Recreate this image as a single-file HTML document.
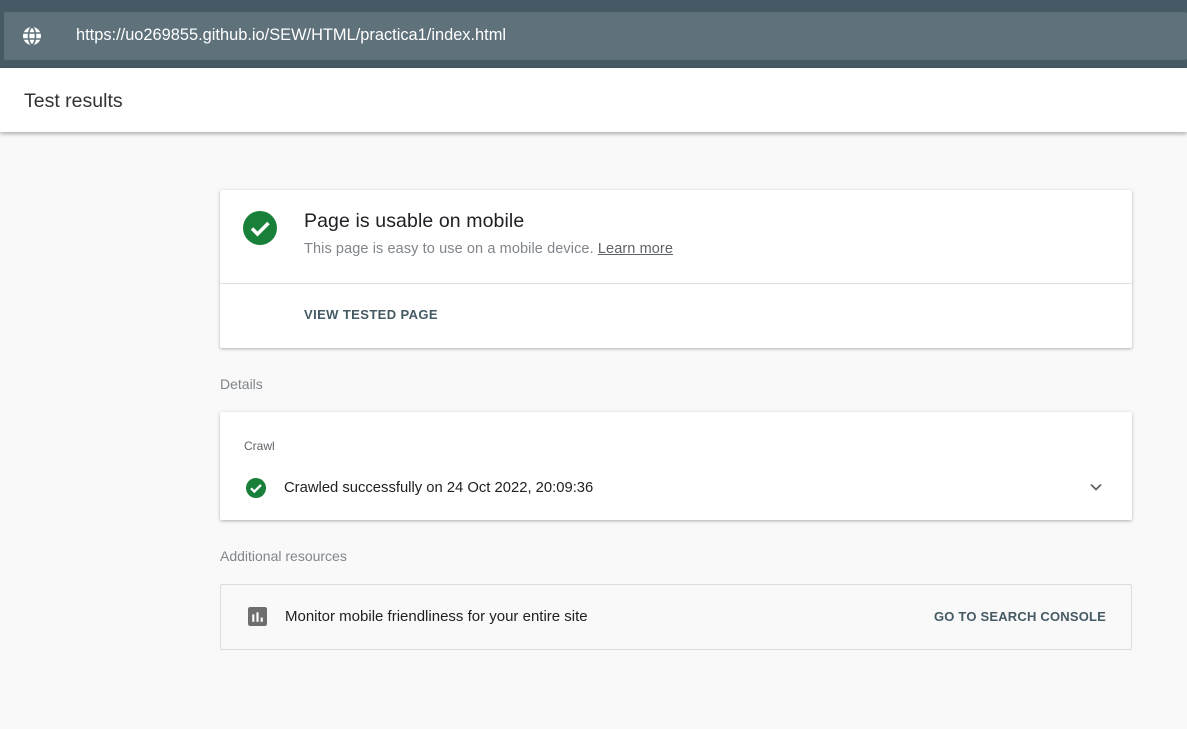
<!DOCTYPE html>
<html><head><style>
body{margin:0;width:1187px;height:729px;background:#f9f9f9;font-family:"Liberation Sans",sans-serif;position:relative;overflow:hidden}
.top{position:absolute;left:0;top:0;width:1187px;height:68px;background:#465a65}
.url{position:absolute;left:4px;top:12px;width:1183px;height:48px;background:#5f717a;border-radius:2px}
.url span{position:absolute;left:72px;top:14px;color:#fff;font-size:16.4px}
.hdr{position:absolute;left:0;top:68px;width:1187px;height:64px;background:#fff;box-shadow:0 2px 4px rgba(0,0,0,.3)}
.hdr span{position:absolute;left:24px;top:22px;font-size:19.5px;color:#333}
.card{position:absolute;left:220px;width:912px;background:#fff;box-shadow:0 1px 3px rgba(0,0,0,.3);border-radius:2px}
.t{position:absolute;white-space:nowrap}
</style></head><body>
<div class="top"><div class="url">
<svg style="position:absolute;left:18px;top:14px" width="20" height="20" viewBox="0 0 20 20"><circle cx="10" cy="10" r="9" fill="#fff"/><g stroke="#5f717a" stroke-width="1.6" fill="none"><ellipse cx="10" cy="10" rx="3.5" ry="8.5"/><line x1="1" y1="7" x2="19" y2="7"/><line x1="1" y1="13" x2="19" y2="13"/></g></svg>
<span>https://uo269855.github.io/SEW/HTML/practica1/index.html</span></div></div>
<div class="hdr"><span>Test results</span></div>
<div class="card" style="top:190px;height:158px">
<svg style="position:absolute;left:23px;top:21px" width="34" height="34" viewBox="0 0 34 34"><circle cx="17" cy="17" r="17" fill="#188038"/><path d="M9 17.5l5.5 5.5L25.5 12" stroke="#fff" stroke-width="3.5" fill="none"/></svg>
<div class="t" style="left:84px;top:20px;font-size:19.5px;color:#202124;letter-spacing:.1px">Page is usable on mobile</div>
<div class="t" style="left:84px;top:51px;font-size:14.5px;color:#80868b;letter-spacing:.1px">This page is easy to use on a mobile device. <u style="color:#5f6368">Learn more</u></div>
<div style="position:absolute;left:0;top:93px;width:912px;height:1px;background:#e0e0e0"></div>
<div class="t" style="left:84px;top:117px;font-size:13px;font-weight:bold;color:#455a64;letter-spacing:.4px">VIEW TESTED PAGE</div>
</div>
<div class="t" style="left:220px;top:376px;font-size:14px;color:#80868b">Details</div>
<div class="card" style="top:412px;height:108px">
<div class="t" style="left:24px;top:27px;font-size:12px;color:#5f6368">Crawl</div>
<svg style="position:absolute;left:26px;top:66px" width="20" height="20" viewBox="0 0 20 20"><circle cx="10" cy="10" r="10" fill="#188038"/><path d="M5 10.3l3.3 3.3L15 7" stroke="#fff" stroke-width="2.3" fill="none"/></svg>
<div class="t" style="left:64px;top:68px;font-size:14.8px;color:#202124">Crawled successfully on 24 Oct 2022, 20:09:36</div>
<svg style="position:absolute;left:869px;top:70px" width="14" height="10" viewBox="0 0 14 10"><path d="M2 2.5l5 5 5-5" stroke="#5f6368" stroke-width="1.8" fill="none"/></svg>
</div>
<div class="t" style="left:220px;top:548px;font-size:14px;color:#80868b">Additional resources</div>
<div style="position:absolute;left:220px;top:584px;width:910px;height:64px;border:1px solid #dadce0;border-radius:2px;background:#f9f9f9">
<svg style="position:absolute;left:27px;top:22px" width="19" height="19" viewBox="0 0 18 18"><rect width="18" height="18" rx="2" fill="#6e6e6e"/><rect x="4" y="7" width="2" height="7" fill="#fff"/><rect x="8" y="5" width="2" height="9" fill="#fff"/><rect x="12" y="10" width="2" height="4" fill="#fff"/></svg>
<div class="t" style="left:64px;top:23px;font-size:15px;color:#202124">Monitor mobile friendliness for your entire site</div>
<div class="t" style="left:713px;top:24px;font-size:13px;font-weight:bold;color:#455a64;letter-spacing:.2px">GO TO SEARCH CONSOLE</div>
</div>
</body></html>
